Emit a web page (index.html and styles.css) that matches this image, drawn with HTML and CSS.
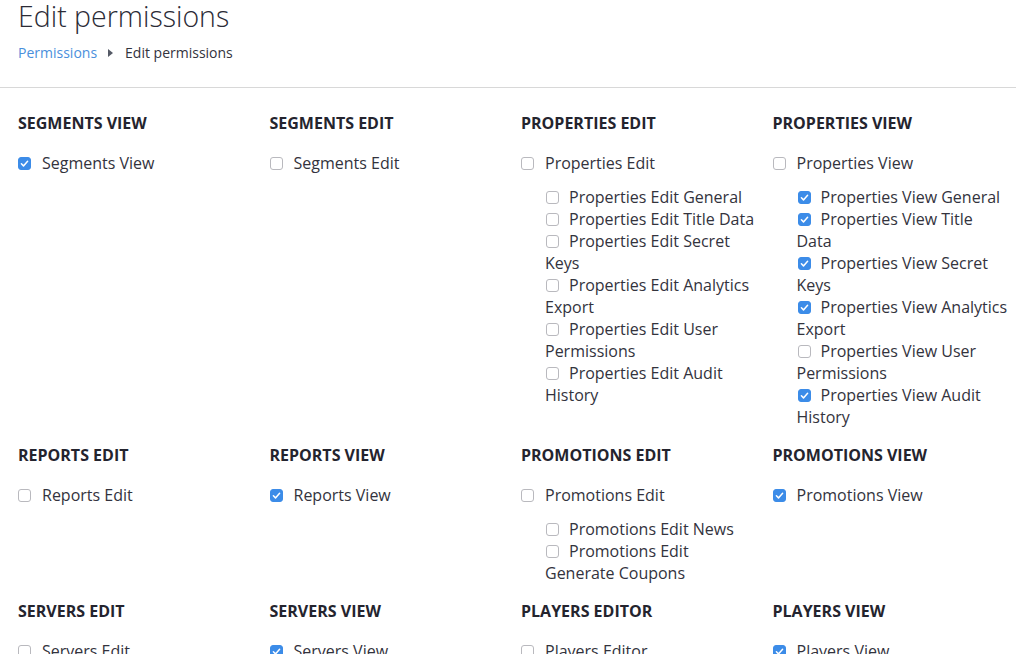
FILE: index.html
```html
<!DOCTYPE html>
<html lang="en">
<head>
<meta charset="utf-8">
<title>Edit permissions</title>
<link rel="stylesheet" href="styles.css">
</head>
<body>
<header class="head">
  <h1 class="title">Edit permissions</h1>
  <nav class="crumbs">
    <a class="crumb-link" href="#">Permissions</a>
    <span class="crumb-sep"></span>
    <span class="crumb-current">Edit permissions</span>
  </nav>
</header>
<hr class="rule">
<main class="grid">
  <section class="perm">
    <h2 class="perm-title">Segments View</h2>
    <label class="item"><input type="checkbox" class="box" checked>Segments View</label>
  </section>
  <section class="perm">
    <h2 class="perm-title">Segments Edit</h2>
    <label class="item"><input type="checkbox" class="box">Segments Edit</label>
  </section>
  <section class="perm">
    <h2 class="perm-title">Properties Edit</h2>
    <label class="item"><input type="checkbox" class="box">Properties Edit</label>
    <div class="subs">
      <label class="sub"><input type="checkbox" class="box">Properties Edit General</label>
      <label class="sub"><input type="checkbox" class="box">Properties Edit Title Data</label>
      <label class="sub"><input type="checkbox" class="box">Properties Edit Secret Keys</label>
      <label class="sub"><input type="checkbox" class="box">Properties Edit Analytics Export</label>
      <label class="sub"><input type="checkbox" class="box">Properties Edit User Permissions</label>
      <label class="sub"><input type="checkbox" class="box">Properties Edit Audit History</label>
    </div>
  </section>
  <section class="perm">
    <h2 class="perm-title">Properties View</h2>
    <label class="item"><input type="checkbox" class="box">Properties View</label>
    <div class="subs">
      <label class="sub"><input type="checkbox" class="box" checked>Properties View General</label>
      <label class="sub"><input type="checkbox" class="box" checked>Properties View Title Data</label>
      <label class="sub"><input type="checkbox" class="box" checked>Properties View Secret Keys</label>
      <label class="sub"><input type="checkbox" class="box" checked>Properties View Analytics Export</label>
      <label class="sub"><input type="checkbox" class="box">Properties View User Permissions</label>
      <label class="sub"><input type="checkbox" class="box" checked>Properties View Audit History</label>
    </div>
  </section>

  <section class="perm">
    <h2 class="perm-title">Reports Edit</h2>
    <label class="item"><input type="checkbox" class="box">Reports Edit</label>
  </section>
  <section class="perm">
    <h2 class="perm-title">Reports View</h2>
    <label class="item"><input type="checkbox" class="box" checked>Reports View</label>
  </section>
  <section class="perm">
    <h2 class="perm-title">Promotions Edit</h2>
    <label class="item"><input type="checkbox" class="box">Promotions Edit</label>
    <div class="subs">
      <label class="sub"><input type="checkbox" class="box">Promotions Edit News</label>
      <label class="sub"><input type="checkbox" class="box">Promotions Edit Generate Coupons</label>
    </div>
  </section>
  <section class="perm">
    <h2 class="perm-title">Promotions View</h2>
    <label class="item"><input type="checkbox" class="box" checked>Promotions View</label>
  </section>

  <section class="perm">
    <h2 class="perm-title">Servers Edit</h2>
    <label class="item"><input type="checkbox" class="box">Servers Edit</label>
  </section>
  <section class="perm">
    <h2 class="perm-title">Servers View</h2>
    <label class="item"><input type="checkbox" class="box" checked>Servers View</label>
  </section>
  <section class="perm">
    <h2 class="perm-title">Players Editor</h2>
    <label class="item"><input type="checkbox" class="box">Players Editor</label>
  </section>
  <section class="perm">
    <h2 class="perm-title">Players View</h2>
    <label class="item"><input type="checkbox" class="box" checked>Players View</label>
  </section>
</main>
</body>
</html>
```

FILE: styles.css
```css
html, body {
  margin: 0;
  padding: 0;
  background: #ffffff;
}

body {
  font-family: "Open Sans", "Liberation Sans", sans-serif;
  color: #33333d;
  overflow: hidden;
}

.head {
  padding-left: 18px;
}

.title {
  margin: 0;
  font-size: 28.5px;
  font-weight: 300;
  line-height: 33px;
  color: #2b2b36;
}

.crumbs {
  display: flex;
  align-items: center;
  margin-top: 10px;
  font-size: 14px;
  line-height: 20px;
}

.crumb-link {
  color: #4a8fdc;
  text-decoration: none;
}

.crumb-sep {
  width: 0;
  height: 0;
  margin: 0 12px 0 11px;
  border-top: 4px solid transparent;
  border-bottom: 4px solid transparent;
  border-left: 5px solid #555a66;
}

.crumb-current {
  color: #33333d;
}

.rule {
  margin: 24px 0 0 0;
  border: 0;
  height: 1px;
  background: #d8d8d8;
}

.grid {
  display: grid;
  grid-template-columns: repeat(4, 237px);
  column-gap: 14.5px;
  row-gap: 16px;
  padding: 24px 0 0 18px;
}

.perm-title {
  margin: 0 0 18px 0;
  font-size: 16px;
  font-weight: 700;
  line-height: 22px;
  text-transform: uppercase;
  color: #24242e;
}

.item,
.sub {
  display: block;
  font-size: 16px;
  line-height: 22px;
  color: #33333d;
}

.subs {
  margin: 12px 0 0 24px;
}

.box {
  -webkit-appearance: none;
  appearance: none;
  display: inline-block;
  box-sizing: border-box;
  width: 13px;
  height: 13px;
  margin: 0 11px 0 0;
  vertical-align: -1px;
  border: 1px solid #b9b9be;
  border-radius: 3px;
  background: #ffffff;
}

.sub .box {
  margin-left: 1px;
  margin-right: 10px;
}

.box:checked {
  border-color: #3c8ce8;
  background-color: #3c8ce8;
  background-image: url("data:image/svg+xml,%3Csvg xmlns='http://www.w3.org/2000/svg' viewBox='0 0 13 13'%3E%3Cpath d='M3.4 6.8 L5.5 8.9 L9.6 4.2' fill='none' stroke='%23ffffff' stroke-width='1.5' stroke-linecap='round' stroke-linejoin='round'/%3E%3C/svg%3E");
  background-repeat: no-repeat;
  background-position: center;
  background-size: 13px 13px;
}
```
